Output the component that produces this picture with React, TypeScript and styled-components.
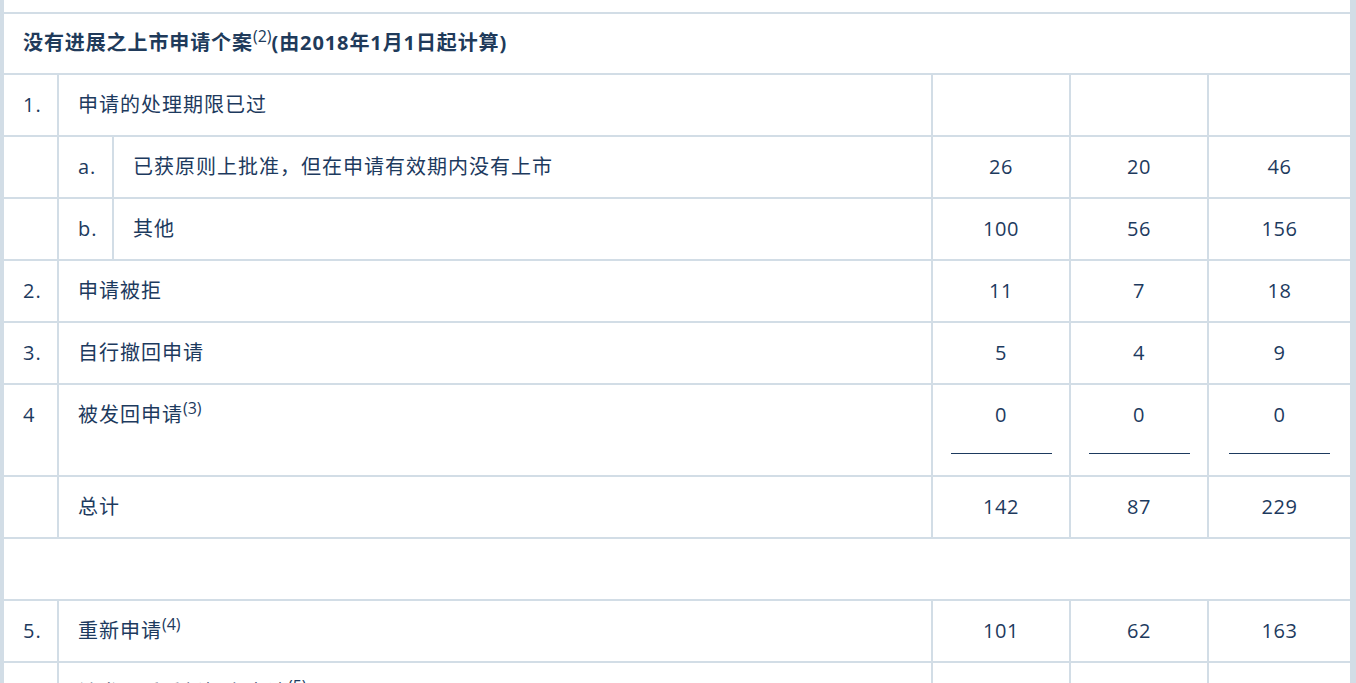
import React from 'react';
import styled, { createGlobalStyle } from 'styled-components';

// 스타일

const GlobalStyle = createGlobalStyle`
  html, body {
    margin: 0;
    padding: 0;
    overflow: hidden;
    background: #ffffff;
  }
`;

const Frame = styled.div`
  width: 1356px;
  height: 683px;
  box-sizing: border-box;
  overflow: hidden;
  background: #d2dde6;
  border-left: 2px solid #d2dde6;
  border-right: 4px solid #d2dde6;
`;

const Table = styled.table`
  width: 1350px;
  margin-top: -2px;
  table-layout: fixed;
  border-collapse: separate;
  border-spacing: 2px;
  background: #d2dde6;
  font-family: 'Open Sans', 'Noto Sans CJK SC', sans-serif;
  font-size: 20px;
  letter-spacing: 1px;
  color: #1d3a5e;
`;

const Cell = styled.td<{ $gap?: boolean }>`
  background: #ffffff;
  padding: ${(p) => (p.$gap ? '0' : '15px 19px')};
  height: ${(p) => (p.$gap ? '12px' : 'auto')};
  line-height: 30px;
  vertical-align: top;
  text-align: left;
  box-sizing: border-box;

  &:empty {
    height: ${(p) => (p.$gap ? '12px' : '60px')};
  }
`;

const NumCell = styled(Cell)`
  text-align: center;
  letter-spacing: 0.6px;
`;

const Caption = styled(Cell)`
  font-weight: 700;
  padding: 14px 19px 15px;
  letter-spacing: 0.9px;
  color: #203a5a;
`;

const Sup = styled.sup`
  font-size: 16px;
  line-height: 0;
  letter-spacing: 0;
  vertical-align: 8px;
  font-weight: 400;
`;

const Rule = styled.span`
  display: inline-block;
  width: 101px;
  height: 23px;
  margin-left: -1px;
  border-bottom: 1px solid #1d3a5e;
  vertical-align: top;
`;

type Row = {
  no?: string;
  sub?: string;
  label: React.ReactNode;
  values?: string[];
  ruled?: boolean;
};

const rows: Row[] = [
  { no: '1.', label: '申请的处理期限已过', values: ['', '', ''] },
  { sub: 'a.', label: '已获原则上批准，但在申请有效期内没有上市', values: ['26', '20', '46'] },
  { sub: 'b.', label: '其他', values: ['100', '56', '156'] },
  { no: '2.', label: '申请被拒', values: ['11', '7', '18'] },
  { no: '3.', label: '自行撤回申请', values: ['5', '4', '9'] },
  { no: '4', label: <>被发回申请<Sup>(3)</Sup></>, values: ['0', '0', '0'], ruled: true },
  { label: '总计', values: ['142', '87', '229'] },
];

const App: React.FC = () => {
  return (
    <>
      <GlobalStyle />
      <Frame>
        <Table>
          <colgroup>
            <col style={{ width: 53 }} />
            <col style={{ width: 53 }} />
            <col style={{ width: 817 }} />
            <col style={{ width: 136 }} />
            <col style={{ width: 136 }} />
            <col style={{ width: 141 }} />
          </colgroup>
          <tbody>
            {/* 위쪽에 잘린 행 */}
            <tr>
              <Cell colSpan={6} $gap />
            </tr>
            <tr>
              <Caption colSpan={6}>
                没有进展之上市申请个案<Sup>(2)</Sup>(由2018年1月1日起计算)
              </Caption>
            </tr>

            {rows.map((row, i) => (
              <tr key={i}>
                <Cell>{row.no}</Cell>
                {row.sub ? (
                  <>
                    <Cell>{row.sub}</Cell>
                    <Cell>{row.label}</Cell>
                  </>
                ) : (
                  <Cell colSpan={2}>{row.label}</Cell>
                )}
                {row.values?.map((v, j) => (
                  <NumCell key={j}>
                    {v}
                    {row.ruled && (
                      <>
                        <br />
                        <Rule />
                      </>
                    )}
                  </NumCell>
                ))}
              </tr>
            ))}

            <tr>
              <Cell colSpan={6} />
            </tr>
            <tr>
              <Cell>5.</Cell>
              <Cell colSpan={2}>
                重新申请<Sup>(4)</Sup>
              </Cell>
              <NumCell>101</NumCell>
              <NumCell>62</NumCell>
              <NumCell>163</NumCell>
            </tr>
            <tr>
              <Cell />
              <Cell colSpan={2}>
                被发回后重新提交申请<Sup>(5)</Sup>
              </Cell>
              <NumCell />
              <NumCell />
              <NumCell />
            </tr>
          </tbody>
        </Table>
      </Frame>
    </>
  );
};

export default App;
